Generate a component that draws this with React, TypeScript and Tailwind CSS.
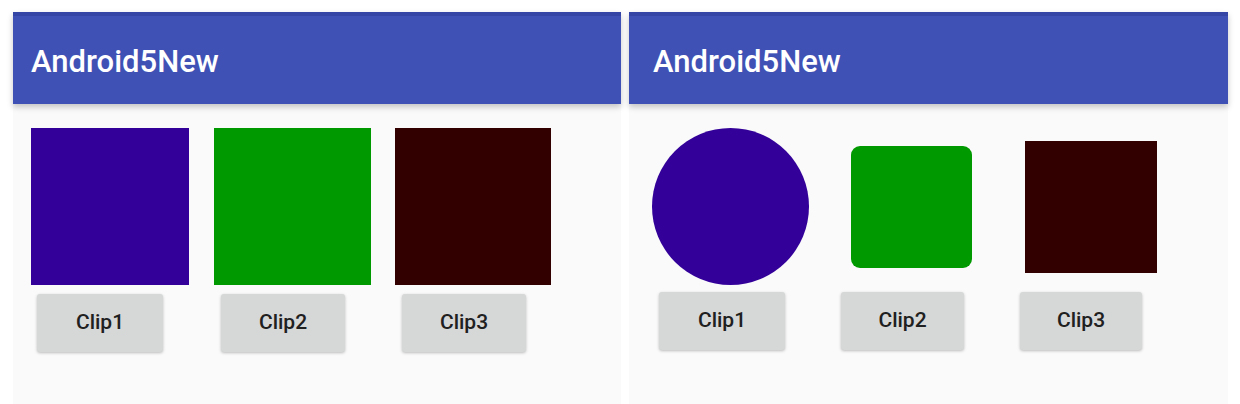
import React from "react";

const font = { fontFamily: "Roboto, 'Noto Sans', sans-serif" };

function Header({ pl }: { pl: string }) {
  return (
    <div className="relative z-10 h-[92px] bg-[#3F51B5] shadow-[0_3px_6px_rgba(0,0,0,0.22)]">
      <div className="h-[4px] bg-[#3445A6]" />
      <div className={`${pl} pt-[31px] text-[31px] leading-[30px] font-medium text-white`}>Android5New</div>
    </div>
  );
}

function Btn({ label, w, cls }: { label: string; w: string; cls: string }) {
  return (
    <div
      className={`${w} ${cls} h-[58px] flex items-center justify-center rounded-[3px] bg-[#D6D7D7] shadow-[0_1px_3px_rgba(0,0,0,0.25)] text-[21px] font-medium text-[#202020]`}
    >
      {label}
    </div>
  );
}

export default function App() {
  return (
    <div className="w-[1240px] h-[404px] bg-white overflow-hidden pt-[12px] pl-[13px] flex gap-[8px]" style={font}>
      {/* Left panel */}
      <div className="w-[608px] h-[392px] bg-[#FAFAFA] flex flex-col">
        <Header pl="pl-[18px]" />
        <div className="flex pl-[18px] pt-[24px]">
          <div className="flex flex-col">
            <div className="w-[158px] h-[157px] bg-[#330099]" />
            <Btn label="Clip1" w="w-[126px]" cls="ml-[6px] mt-[9px]" />
          </div>
          <div className="flex flex-col ml-[25px]">
            <div className="w-[157px] h-[157px] bg-[#009900]" />
            <Btn label="Clip2" w="w-[124px]" cls="ml-[7px] mt-[9px]" />
          </div>
          <div className="flex flex-col ml-[24px]">
            <div className="w-[156px] h-[157px] bg-[#330000]" />
            <Btn label="Clip3" w="w-[124px]" cls="ml-[7px] mt-[9px]" />
          </div>
        </div>
      </div>
      {/* Right panel */}
      <div className="w-[599px] h-[392px] bg-[#FAFAFA] flex flex-col">
        <Header pl="pl-[24px]" />
        <div className="flex pl-[23px] pt-[24px]">
          <div className="flex flex-col">
            <div className="h-[157px] flex items-center">
              <div className="w-[157px] h-[157px] rounded-full bg-[#330099]" />
            </div>
            <Btn label="Clip1" w="w-[126px]" cls="ml-[7px] mt-[7px]" />
          </div>
          <div className="flex flex-col ml-[32px]">
            <div className="h-[157px] flex items-center">
              <div className="ml-[10px] w-[121px] h-[122px] rounded-[9px] bg-[#009900]" />
            </div>
            <Btn label="Clip2" w="w-[123px]" cls="mt-[7px]" />
          </div>
          <div className="flex flex-col ml-[48px]">
            <div className="h-[157px] flex items-center">
              <div className="ml-[5px] w-[132px] h-[132px] bg-[#330000]" />
            </div>
            <Btn label="Clip3" w="w-[122px]" cls="mt-[7px]" />
          </div>
        </div>
      </div>
    </div>
  );
}
